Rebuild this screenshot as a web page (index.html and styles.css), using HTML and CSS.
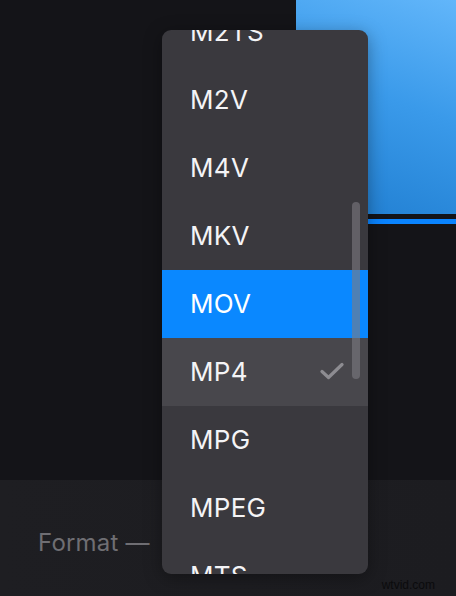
FILE: index.html
```html
<!DOCTYPE html>
<html>
<head>
<meta charset="utf-8">
<link rel="stylesheet" href="styles.css">
</head>
<body>
<div class="screen">
  <div class="top">
    <div class="left"></div>
    <div class="right">
      <div class="preview"></div>
      <div class="gap"></div>
      <div class="progress"></div>
    </div>
  </div>
  <div class="bottom">
    <span class="label">Format —</span>
    <span class="watermark">wtvid.com</span>
  </div>
  <div class="menu">
    <ul class="list">
      <li class="item">M2TS</li>
      <li class="item">M2V</li>
      <li class="item">M4V</li>
      <li class="item">MKV</li>
      <li class="item active">MOV</li>
      <li class="item current">MP4
        <svg class="check" viewBox="0 0 24 18" width="24" height="18"><path d="M2 9.5 L8.5 15.5 L22 2.5" fill="none" stroke="#8d8c91" stroke-width="3.2" stroke-linecap="round" stroke-linejoin="round"/></svg>
      </li>
      <li class="item">MPG</li>
      <li class="item">MPEG</li>
      <li class="item">MTS</li>
    </ul>
    <div class="scrollbar"></div>
  </div>
</div>
</body>
</html>
```

FILE: styles.css
```css
html, body {
  margin: 0;
  padding: 0;
}
body {
  width: 456px;
  height: 596px;
  overflow: hidden;
  background: #141418;
  font-family: Inter, "Noto Sans", sans-serif;
}
.screen {
  position: relative;
  width: 456px;
  height: 596px;
}
.top {
  display: flex;
  height: 480px;
  background: #141418;
}
.left {
  flex: 1;
}
.right {
  width: 160px;
  display: flex;
  flex-direction: column;
}
.preview {
  height: 214px;
  background: linear-gradient(200deg, #62b6fa 0%, #3a9aea 45%, #1f7dd0 100%);
}
.gap {
  height: 5px;
  background: #141418;
}
.progress {
  height: 5px;
  background: #0a84ff;
}
.bottom {
  height: 116px;
  background: linear-gradient(90deg, #1e1e22 0%, #1c1c20 100%);
  position: relative;
  box-sizing: border-box;
  padding: 47px 0 0 38px;
}
.label {
  font-size: 24px;
  line-height: 32px;
  color: #6f6e73;
  letter-spacing: 0.2px;
}
.watermark {
  position: absolute;
  right: 21px;
  bottom: 4px;
  font-family: "Liberation Sans", Arial, sans-serif;
  font-size: 12px;
  color: #0b0b0d;
}
.menu {
  position: absolute;
  left: 162px;
  top: 30px;
  width: 206px;
  height: 544px;
  border-radius: 9px;
  background: #3a393e;
  overflow: hidden;
  box-shadow: 0 4px 18px rgba(0, 0, 0, 0.35);
}
.list {
  list-style: none;
  margin: -32px 0 0 0;
  padding: 0;
}
.item {
  position: relative;
  height: 68px;
  line-height: 68px;
  padding-left: 28px;
  font-size: 26px;
  color: #f4f4f6;
  letter-spacing: 0.3px;
}
.item.active {
  background: #0a88ff;
  color: #ffffff;
}
.item.current {
  background: #48474c;
}
.check {
  position: absolute;
  right: 24px;
  top: 24px;
}
.scrollbar {
  position: absolute;
  left: 190px;
  top: 172px;
  width: 8px;
  height: 177px;
  border-radius: 4px;
  background: rgba(125, 124, 130, 0.6);
}
```
